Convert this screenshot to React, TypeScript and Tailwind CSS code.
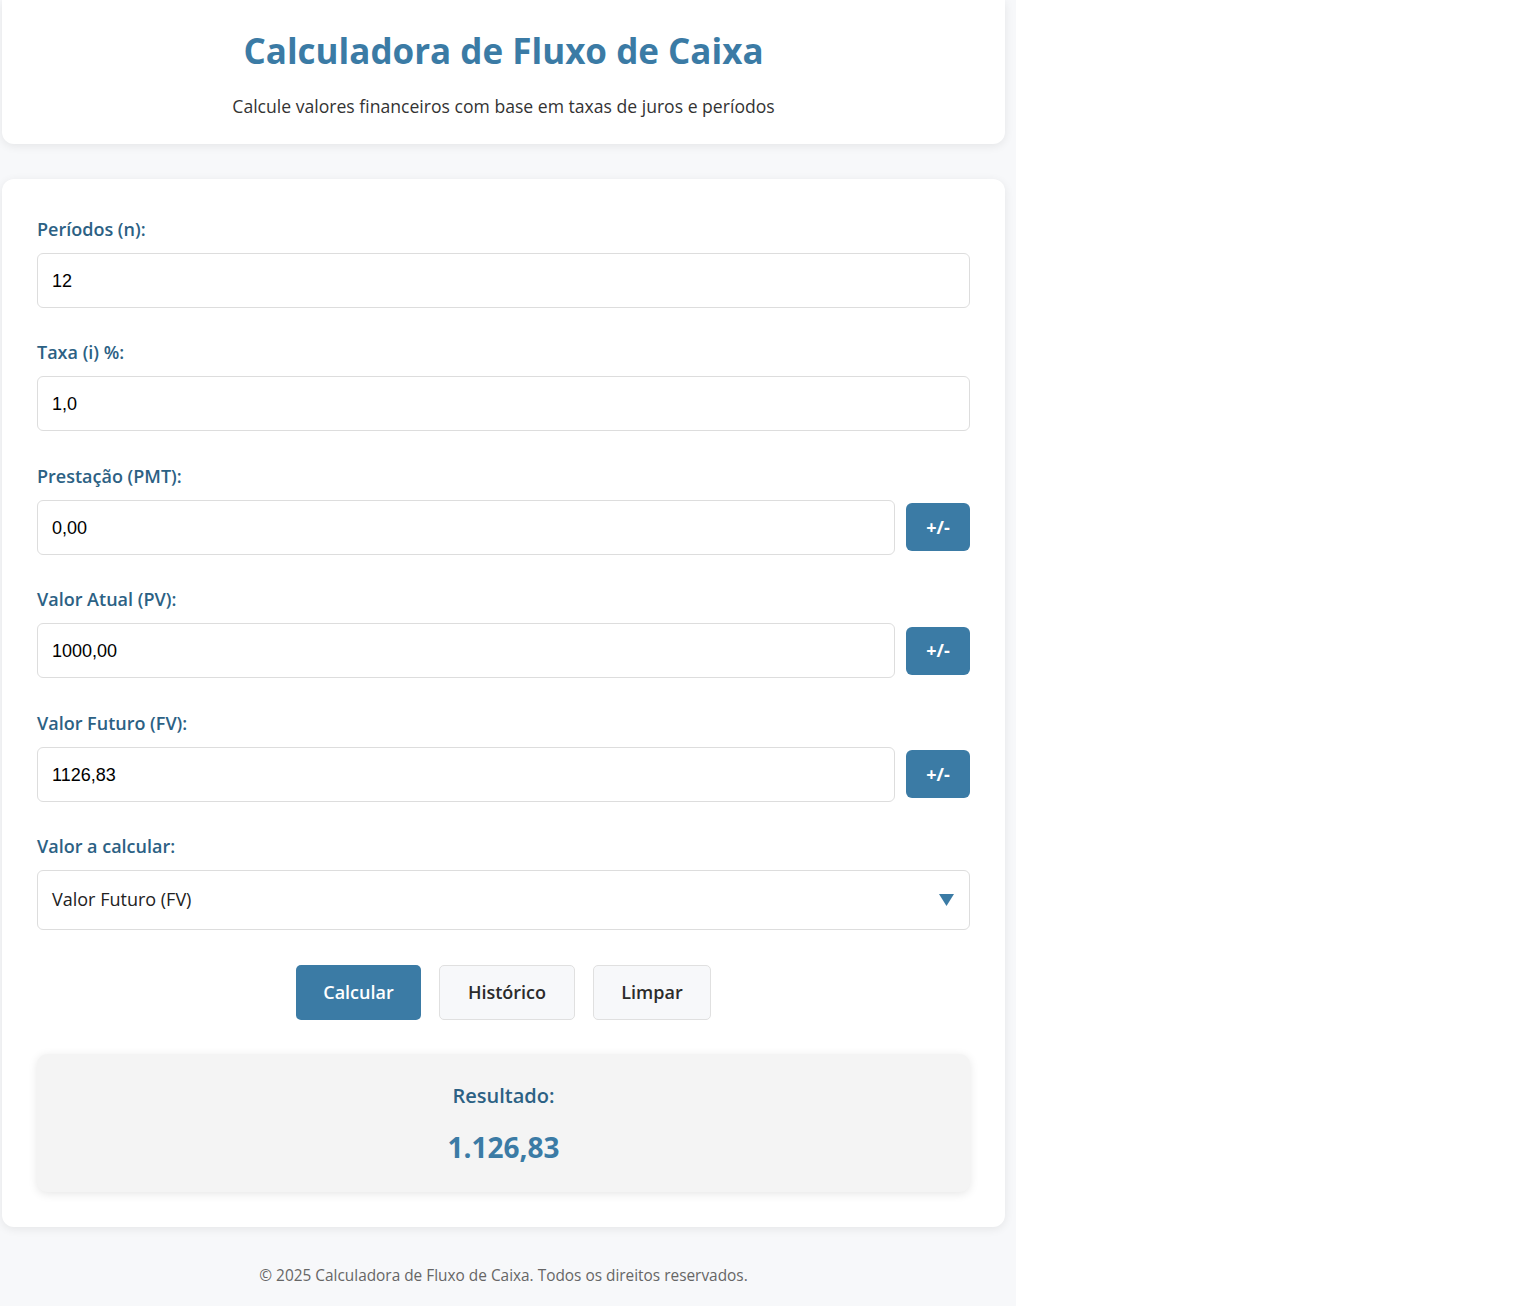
import React from "react";

const font = { fontFamily: '"Open Sans", "Noto Sans", sans-serif' };

function Field({ label, value, toggle }: { label: string; value: string; toggle?: boolean }) {
  return (
    <div className="mb-[32.4px]">
      <div className="text-[18px] leading-[24px] font-semibold text-[#2c6184] mb-[12px]">{label}</div>
      <div className="flex items-center gap-[11px]">
        <div
          className="flex-1 h-[55px] border border-[#dddddd] rounded-[6px] bg-white flex items-center px-[14px] pt-[2px] text-[18px] text-black"
          style={{ fontFamily: '"Liberation Sans", Arial, sans-serif' }}
        >
          {value}
        </div>
        {toggle && (
          <div className="w-[64px] h-[48px] rounded-[6px] bg-[#3b7ba5] text-white font-bold text-[18px] flex items-center justify-center">
            +/-
          </div>
        )}
      </div>
    </div>
  );
}

export default function App() {
  return (
    <div className="w-[1016px] min-h-[1306px] bg-[#f7f8fa]" style={font}>
      <div className="ml-[2px] w-[1003px] h-[144px] bg-white rounded-b-[12px] shadow-[0_2px_10px_rgba(0,0,0,0.08)] flex flex-col items-center pt-[26px]">
        <h1 className="text-[35px] leading-[50px] font-bold text-[#3b7ba5]">Calculadora de Fluxo de Caixa</h1>
        <p className="mt-[18px] text-[17.6px] leading-[24px] text-[#333333]">
          Calcule valores financeiros com base em taxas de juros e períodos
        </p>
      </div>
      <div className="ml-[2px] mt-[35px] w-[1003px] bg-white rounded-[12px] shadow-[0_2px_10px_rgba(0,0,0,0.08)] px-[35px] pt-[38px] pb-[35px]">
        <Field label="Períodos (n):" value="12" />
        <Field label="Taxa (i) %:" value="1,0" />
        <Field label="Prestação (PMT):" value="0,00" toggle />
        <Field label="Valor Atual (PV):" value="1000,00" toggle />
        <Field label="Valor Futuro (FV):" value="1126,83" toggle />
        <div className="mb-[35px]">
          <div className="text-[18px] leading-[24px] font-semibold text-[#2c6184] mb-[12px]">Valor a calcular:</div>
          <div className="h-[60px] border border-[#dddddd] rounded-[6px] bg-white flex items-center justify-between pl-[14px] pr-[15px] text-[18px] text-[#222222]">
            <span>Valor Futuro (FV)</span>
            <svg width="15" height="12" viewBox="0 0 15 12">
              <polygon points="0,0 15,0 7.5,12" fill="#3b7ba5" />
            </svg>
          </div>
        </div>
        <div className="flex justify-center gap-[18px]">
          <div className="w-[125px] h-[55px] rounded-[5px] bg-[#3b7ba5] text-white text-[18px] font-semibold flex items-center justify-center">
            Calcular
          </div>
          <div className="w-[136px] h-[55px] rounded-[5px] bg-[#f7f8fa] border border-[#e0e0e0] text-[#2b2b2b] text-[18px] font-semibold flex items-center justify-center">
            Histórico
          </div>
          <div className="w-[118px] h-[55px] rounded-[5px] bg-[#f7f8fa] border border-[#e0e0e0] text-[#2b2b2b] text-[18px] font-semibold flex items-center justify-center">
            Limpar
          </div>
        </div>
        <div className="mt-[34px] h-[138px] bg-[#f4f4f4] rounded-[10px] shadow-[0_2px_10px_rgba(0,0,0,0.1)] flex flex-col items-center pt-[28px]">
          <div className="text-[20px] leading-[28px] font-semibold text-[#2c6184]">Resultado:</div>
          <div className="mt-[18px] text-[28px] leading-[38px] font-bold text-[#3b7ba5]">1.126,83</div>
        </div>
      </div>
      <div className="w-[1007px] text-center pt-[39px] text-[15.4px] leading-[20px] text-[#666666]">
        © 2025 Calculadora de Fluxo de Caixa. Todos os direitos reservados.
      </div>
    </div>
  );
}
